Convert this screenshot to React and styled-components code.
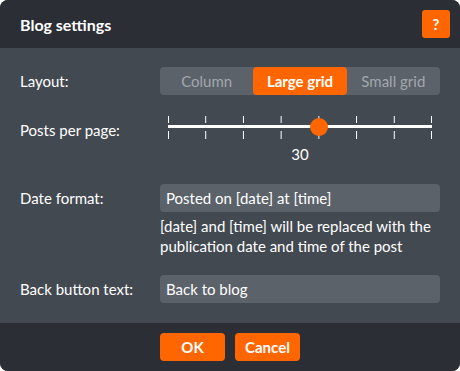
import React from 'react';
import styled, { createGlobalStyle } from 'styled-components';

const GlobalStyle = createGlobalStyle`
  html, body {
    margin: 0;
    padding: 0;
    background: #ffffff;
  }
  body {
    font-family: Lato, "Open Sans", sans-serif;
  }
`;

const Dialog = styled.div`
  width: 460px;
  height: 371px;
  display: flex;
  flex-direction: column;
  border-radius: 8px;
  overflow: hidden;
  background: #434951;
  color: #ffffff;
`;

const Header = styled.div`
  height: 48px;
  flex-shrink: 0;
  display: flex;
  align-items: center;
  justify-content: space-between;
  padding: 0 10px 0 20px;
  background: #2b2e35;
`;

const Title = styled.h1`
  margin: 0;
  font-size: 16px;
  font-weight: 700;
`;

const HelpButton = styled.button`
  width: 28px;
  height: 28px;
  border: none;
  border-radius: 3px;
  background: #ff6600;
  color: #ffffff;
  font-family: inherit;
  font-size: 15px;
  font-weight: 700;
  padding: 0;
`;

const Body = styled.div`
  flex: 1;
  padding: 19px 20px 0 20px;
  display: flex;
  flex-direction: column;
`;

const Row = styled.div`
  display: grid;
  grid-template-columns: 140px 280px;
  align-items: ${(p) => (p.$top ? 'start' : 'center')};
  margin-bottom: ${(p) => p.$gap || 0}px;
`;

const Label = styled.label`
  font-size: 15px;
  line-height: 28px;
`;

const Segmented = styled.div`
  display: flex;
  height: 28px;
  border-radius: 4px;
  background: #5c626a;
`;

const Segment = styled.button`
  flex: 1;
  border: none;
  border-radius: 4px;
  padding: 0;
  font-family: inherit;
  font-size: 15px;
  font-weight: ${(p) => (p.$active ? 700 : 400)};
  color: ${(p) => (p.$active ? '#ffffff' : '#a2a7ad')};
  background: ${(p) => (p.$active ? '#ff6600' : 'transparent')};
`;

const SliderBox = styled.div`
  display: flex;
  flex-direction: column;
  align-items: center;
`;

const Track = styled.div`
  position: relative;
  width: 264px;
  height: 23px;
`;

const Thumb = styled.div`
  position: absolute;
  top: 2px;
  width: 18px;
  height: 18px;
  margin-left: -9px;
  border-radius: 50%;
  background: #ff6600;
`;

const Value = styled.div`
  font-size: 15px;
  line-height: 20px;
  margin-top: 5px;
`;

const Field = styled.div`
  display: flex;
  flex-direction: column;
`;

const Input = styled.input`
  box-sizing: border-box;
  height: 28px;
  width: 100%;
  border: none;
  border-radius: 4px;
  background: #5c626a;
  color: #ffffff;
  font-family: inherit;
  font-size: 15px;
  padding: 0 6px;
  outline: none;
`;

const Hint = styled.p`
  margin: 4px 0 0 0;
  font-size: 15px;
  line-height: 20px;
`;

const Footer = styled.div`
  height: 48px;
  flex-shrink: 0;
  display: flex;
  justify-content: center;
  align-items: center;
  gap: 10px;
  background: #2b2e35;
`;

const Button = styled.button`
  width: 65px;
  height: 28px;
  border: none;
  border-radius: 4px;
  background: #ff6600;
  color: #ffffff;
  font-family: inherit;
  font-size: 15px;
  font-weight: 700;
  padding: 0;
`;

const ticks = [0, 1, 2, 3, 4, 5, 6, 7];
const value = 30;
const min = 10;
const max = 45;

function Slider() {
  const pct = ((value - min) / (max - min)) * 100;
  return (
    <SliderBox>
      <Track>
        <svg width="264" height="23" viewBox="0 0 264 23" style={{ display: 'block' }}>
          <rect x="0" y="9" width="264" height="3" fill="#ffffff" />
          {ticks.map((t) => {
            const x = Math.min(263.5, Math.max(0.5, (t * 264) / 7));
            return (
              <g key={t} stroke="#ffffff" strokeWidth="1">
                <line x1={x} y1="0" x2={x} y2="7" />
                <line x1={x} y1="15" x2={x} y2="23" />
              </g>
            );
          })}
        </svg>
        <Thumb style={{ left: `${pct}%` }} />
      </Track>
      <Value>{value}</Value>
    </SliderBox>
  );
}

export default function App() {
  return (
    <>
      <GlobalStyle />
      <Dialog>
        <Header>
          <Title>Blog settings</Title>
          <HelpButton>?</HelpButton>
        </Header>
        <Body>
          <Row $gap={21}>
            <Label>Layout:</Label>
            <Segmented>
              <Segment>Column</Segment>
              <Segment $active>Large grid</Segment>
              <Segment>Small grid</Segment>
            </Segmented>
          </Row>
          <Row $top $gap={20}>
            <Label>Posts per page:</Label>
            <Slider />
          </Row>
          <Row $top $gap={19}>
            <Label>Date format:</Label>
            <Field>
              <Input defaultValue="Posted on [date] at [time]" />
              <Hint>[date] and [time] will be replaced with the publication date and time of the post</Hint>
            </Field>
          </Row>
          <Row>
            <Label>Back button text:</Label>
            <Input defaultValue="Back to blog" />
          </Row>
        </Body>
        <Footer>
          <Button>OK</Button>
          <Button>Cancel</Button>
        </Footer>
      </Dialog>
    </>
  );
}
